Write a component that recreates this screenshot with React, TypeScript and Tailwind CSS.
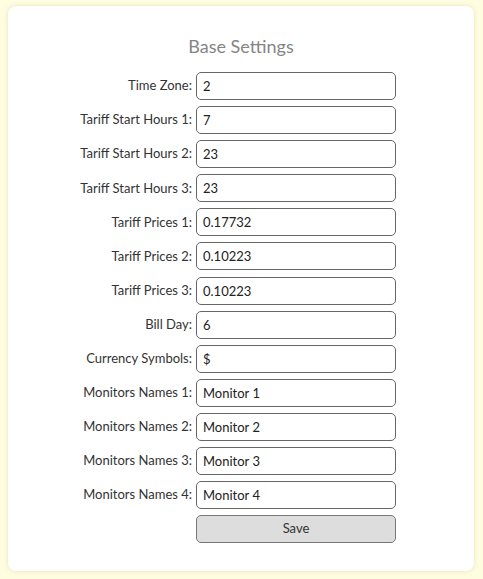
import React from "react";

const rows: [string, string][] = [
  ["Time Zone:", "2"],
  ["Tariff Start Hours 1:", "7"],
  ["Tariff Start Hours 2:", "23"],
  ["Tariff Start Hours 3:", "23"],
  ["Tariff Prices 1:", "0.17732"],
  ["Tariff Prices 2:", "0.10223"],
  ["Tariff Prices 3:", "0.10223"],
  ["Bill Day:", "6"],
  ["Currency Symbols:", "$"],
  ["Monitors Names 1:", "Monitor 1"],
  ["Monitors Names 2:", "Monitor 2"],
  ["Monitors Names 3:", "Monitor 3"],
  ["Monitors Names 4:", "Monitor 4"],
];

export default function App() {
  return (
    <div
      className="min-h-[579px] w-[483px] bg-[#fffde0] pt-[6px] pl-[8px]"
      style={{ fontFamily: "Lato, 'Open Sans', sans-serif" }}
    >
      <div className="w-[466px] h-[565px] bg-white rounded-[8px] shadow-[0_0_4px_rgba(200,200,150,0.5)] pt-[29px]">
        <h1 className="text-center text-[18px] leading-[22px] text-[#858585] mb-[15px]">
          Base Settings
        </h1>
        <div className="grid grid-cols-[184px_200px] gap-x-[4px] gap-y-[6.1px] items-center">
          {rows.map(([label, value]) => (
            <React.Fragment key={label}>
              <label className="text-right text-[13px] text-[#333]">{label}</label>
              <input
                defaultValue={value}
                className="h-[28px] w-[200px] border border-[#666] rounded-[5px] px-[6px] text-[13px] text-[#222] bg-white outline-none"
              />
            </React.Fragment>
          ))}
          <div />
          <button className="h-[28px] w-[200px] border border-[#777] rounded-[5px] bg-[#dddddd] text-[13px] text-[#333]">
            Save
          </button>
        </div>
      </div>
    </div>
  );
}
